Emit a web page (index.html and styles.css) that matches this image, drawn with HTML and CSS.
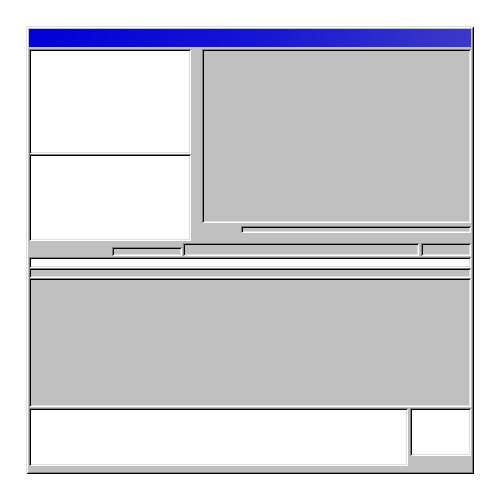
FILE: index.html
```html
<!DOCTYPE html>
<html>
<head>
<meta charset="utf-8">
<link rel="stylesheet" href="styles.css">
</head>
<body>
<div class="window">
  <div class="titlebar"></div>
  <div class="top">
    <div class="left-col">
      <div class="field white pane-a"></div>
      <div class="field white pane-b"></div>
    </div>
    <div class="right-col">
      <div class="field grey view"></div>
      <div class="field grey slider"></div>
    </div>
  </div>
  <div class="status">
    <div class="status-spacer"></div>
    <div class="field grey seg seg1"></div>
    <div class="field grey seg seg2"></div>
    <div class="field grey seg seg3"></div>
  </div>
  <div class="field white input"></div>
  <div class="field grey strip"></div>
  <div class="field grey main"></div>
  <div class="bottom">
    <div class="field white log"></div>
    <div class="field white side"></div>
  </div>
</div>
</body>
</html>
```
FILE: styles.css
```css
html, body {
  margin: 0;
  padding: 0;
  background: #ffffff;
}
body {
  font-family: "Liberation Sans", Arial, sans-serif;
}
.window {
  box-sizing: border-box;
  margin: 26px;
  width: 448px;
  height: 448px;
  padding: 3px;
  background: #c0c0c0;
  box-shadow: inset 1px 1px #dfdfdf, inset -1px -1px #000000, inset 2px 2px #ffffff, inset -2px -2px #808080;
  display: flex;
  flex-direction: column;
}
.titlebar {
  height: 18px;
  flex: none;
  background: linear-gradient(to right, #0000d8, #1414d4 50%, #3a3ac8);
}
.field {
  box-sizing: border-box;
  box-shadow: inset 1px 1px #808080, inset -1px -1px #ffffff, inset 2px 2px #000000, inset -2px -2px #dfdfdf;
}
.white { background: #ffffff; }
.grey { background: #c0c0c0; }
.top {
  margin-top: 2px;
  height: 192px;
  flex: none;
  display: grid;
  grid-template-columns: 162px 269px;
  column-gap: 11px;
}
.left-col {
  display: flex;
  flex-direction: column;
}
.pane-a { height: 105px; }
.pane-b { height: 87px; }
.right-col {
  display: flex;
  flex-direction: column;
}
.view { height: 174px; }
.slider {
  margin-top: 3px;
  margin-left: 39px;
  height: 7px;
}
.status {
  margin-top: 1px;
  height: 14px;
  flex: none;
  display: flex;
  align-items: flex-end;
}
.status-spacer { width: 83px; }
.seg { height: 13px; }
.seg1 { width: 70px; height: 9px; margin-right: 1px; }
.seg2 { width: 236px; margin-right: 2px; }
.seg3 { width: 50px; }
.input {
  margin-top: 1px;
  height: 11px;
  flex: none;
}
.strip {
  height: 10px;
  flex: none;
}
.main {
  height: 129px;
  flex: none;
}
.bottom {
  margin-top: 1px;
  height: 58px;
  flex: none;
  display: flex;
  align-items: flex-start;
  gap: 2px;
}
.log { width: 379px; height: 58px; }
.side { width: 61px; height: 48px; }
```
